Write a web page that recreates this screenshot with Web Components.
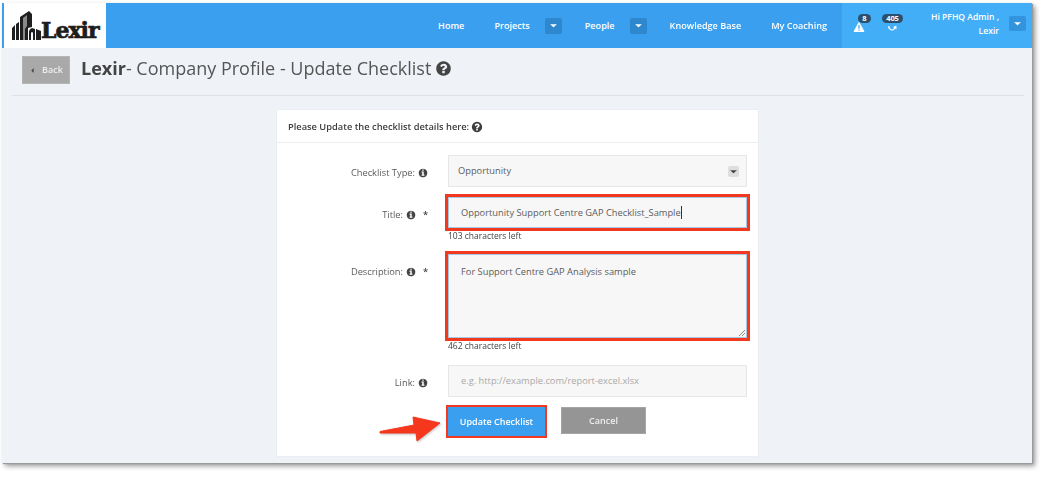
<!DOCTYPE html>
<html lang="en">
<head>
<meta charset="utf-8">
<title>Lexir - Update Checklist</title>
<style>
  html { overflow: hidden; background: #fff; }
  body { margin: 0; padding: 0 0 14px; background: #fff; font-family: "Open Sans", "Liberation Sans", sans-serif; }
</style>
</head>
<body>
<lx-shot>
  <lx-navbar slot="nav">
    <lx-nav-item>Home</lx-nav-item>
    <lx-nav-item dropdown>Projects</lx-nav-item>
    <lx-nav-item dropdown>People</lx-nav-item>
    <lx-nav-item>Knowledge Base</lx-nav-item>
    <lx-nav-item>My Coaching</lx-nav-item>
  </lx-navbar>
  <lx-title-bar slot="title"><b>Lexir</b>- Company Profile - Update Checklist</lx-title-bar>
  <lx-card heading="Please Update the checklist details here:" slot="main">
    <lx-field label="Checklist Type:" kind="select">Opportunity</lx-field>
    <lx-field label="Title:" kind="input" required highlight caret help="103 characters left" gap="12">Opportunity Support Centre GAP Checklist_Sample</lx-field>
    <lx-field label="Description:" kind="textarea" required highlight help="462 characters left" gap="13">For Support Centre GAP Analysis sample</lx-field>
    <lx-field label="Link:" kind="placeholder">e.g. http://example.com/report-excel.xlsx</lx-field>
    <lx-actions></lx-actions>
  </lx-card>
</lx-shot>

<script>
const ICONS = {
  question: '<path d="M1024 1376v-192q0-14-9-23t-23-9h-192q-14 0-23 9t-9 23v192q0 14 9 23t23 9h192q14 0 23-9t9-23zm256-672q0-88-55.500-163t-138.500-116-170-41q-243 0-371 213-15 24 8 42l132 100q7 6 19 6 16 0 25-12 53-68 86-92 34-24 86-24 48 0 85.500 26t37.500 59q0 38-20 61t-68 45q-63 28-115.500 86.500t-52.500 125.500v36q0 14 9 23t23 9h192q14 0 23-9t9-23q0-19 21.500-49.500t54.500-49.500q32-18 49-28.500t46-35 44.500-48 28-60.500 12.500-81zm384 192q0 209-103 385.500t-279.500 279.500-385.500 103-385.500-103-279.500-279.500-103-385.500 103-385.500 279.500-279.500 385.500-103 385.500 103 279.500 279.500 103 385.500z"/>',
  info: '<path d="M1152 1376v-160q0-14-9-23t-23-9h-96v-512q0-14-9-23t-23-9h-320q-14 0-23 9t-9 23v160q0 14 9 23t23 9h96v320h-96q-14 0-23 9t-9 23v160q0 14 9 23t23 9h448q14 0 23-9t9-23zm-128-896v-160q0-14-9-23t-23-9h-192q-14 0-23 9t-9 23v160q0 14 9 23t23 9h192q14 0 23-9t9-23zm640 416q0 209-103 385.500t-279.500 279.500-385.500 103-385.500-103-279.500-279.500-103-385.500 103-385.500 279.500-279.500 385.500-103 385.500 103 279.500 279.500 103 385.500z"/>',
  caret: '<path d="M320 640h1152q40 0 40 30 0 14-11 28l-576 544q-14 12-29 12t-29-12L291 698q-11-14-11-28 0-30 40-30z"/>',
  left: '<path d="M1184 320v1152q0 40-30 40-14 0-28-11L582 925q-12-14-12-29t12-29l544-576q14-11 28-11 30 0 30 40z"/>',
  warning: '<path fill-rule="evenodd" d="M896 160q50 0 80 46l704 1280q28 50 2 96t-82 46H192q-56 0-82-46t2-96L816 206q30-46 80-46zM790 640l26 560h160l26-560zM896 1280a96 96 0 1 0 0 192 96 96 0 0 0 0-192z"/>',
  sync: '<path d="M300 800a600 600 0 0 0 1100 330l180 110-40-560-500 250 170 90a340 340 0 0 1-650-220z"/>'
};

class LxIcon extends HTMLElement {
  connectedCallback() {
    const size = this.getAttribute("size") || "10";
    const name = this.getAttribute("name");
    this.attachShadow({ mode: "open" }).innerHTML = `
      <style>
        :host { display: inline-flex; width: ${size}px; height: ${size}px; flex: none; }
        svg { width: 100%; height: 100%; fill: currentColor; display: block; }
      </style>
      <svg viewBox="0 0 1792 1792">${ICONS[name] || ""}</svg>`;
  }
}

class LxShot extends HTMLElement {
  constructor() {
    super();
    this.attachShadow({ mode: "open" }).innerHTML = `
      <style>
        :host {
          display: flex; flex-direction: column; box-sizing: border-box;
          width: 1030px; height: 460px; margin: 3px 0 0 2px;
          background: #eff3f8; color: #555;
          box-shadow: 1px 1px 1px #9a9a9a, 3px 3px 5px rgba(0,0,0,.42);
          filter: blur(.35px);
        }
        .main { display: flex; justify-content: center; padding-left: 1px; }
      </style>
      <slot name="nav"></slot>
      <slot name="title"></slot>
      <div class="main"><slot name="main"></slot></div>`;
  }
}

class LxNavbar extends HTMLElement {
  constructor() {
    super();
    this.attachShadow({ mode: "open" }).innerHTML = `
      <style>
        :host {
          display: flex; height: 45px; flex: none; background: #3a9fee;
          padding-left: 2px; color: #fff;
        }
        .logo {
          width: 102px; background: #fff; display: flex; align-items: flex-end;
          box-sizing: border-box; padding: 0 0 8px 8px; flex: none;
        }
        .logo svg { width: 29px; height: 29px; display: block; flex: none; }
        .logo span {
          font: 700 22px/20px "DejaVu Serif", serif; color: #1d1d1d;
          letter-spacing: -1px; -webkit-text-stroke: .7px #1d1d1d;
        }
        .links { flex: 1; display: flex; justify-content: flex-end; align-items: stretch; }
        .tools {
          width: 190px; flex: none; box-sizing: border-box; background: #42aef8;
          display: flex; align-items: center; position: relative;
        }
        .alert { position: relative; display: flex; margin-top: 2px; }
        .alert.a { margin-left: 11px; }
        .alert.b { margin-left: 21px; }
        .badge {
          position: absolute; background: #2c4f6b; color: #fff; border-radius: 5px;
          font: 700 7.500px/9px "Open Sans", sans-serif; text-align: center; height: 9px;
        }
        .a .badge { left: 5px; top: -7px; width: 13px; }
        .b .badge { left: -4px; top: -7px; width: 21px; letter-spacing: -.2px; }
        .user {
          margin-left: auto; text-align: right; margin-top: -3px;
          font: 600 8.600px/14px "Open Sans", sans-serif; width: 80px;
        }
        .drop {
          width: 17px; height: 15px; margin: -5px 6px 0 10px; border-radius: 2px;
          background: #3393dc; display: flex; align-items: center; justify-content: center; flex: none;
        }
      </style>
      <div class="logo">
        <svg viewBox="0 0 29 29">
          <path fill="#1f1f1f" d="M0 17l3-3v15H0zM4 13l3-2v18H4zM8 6l9-6 3 3v13l-4 1v12H8zM17 21q0-3 3-4l3 1v11h-2v-7q-1-2-2 0v7h-2zM24 18l5 2v9h-5z"/>
          <path fill="#8a8a8a" d="M11 7l4-3v11l-2 3v11h-2z"/>
        </svg>
        <span>Lexir</span>
      </div>
      <div class="links"><slot></slot></div>
      <div class="tools">
        <div class="alert a"><lx-icon name="warning" size="12"></lx-icon><span class="badge">8</span></div>
        <div class="alert b"><lx-icon name="sync" size="12"></lx-icon><span class="badge">405</span></div>
        <div class="user">Hi PFHQ Admin ,<br>Lexir</div>
        <div class="drop"><lx-icon name="caret" size="9"></lx-icon></div>
      </div>`;
  }
}

class LxNavItem extends HTMLElement {
  connectedCallback() {
    const drop = this.hasAttribute("dropdown");
    this.attachShadow({ mode: "open" }).innerHTML = `
      <style>
        :host {
          display: flex; align-items: center; padding: 0 15px;
          font: 600 9.100px/14px "Open Sans", sans-serif; color: #fff; white-space: nowrap;
          ${drop ? "padding-right: 8px;" : ""}
        }
        .drop {
          width: 17px; height: 16px; margin-left: 15px; border-radius: 2px; background: #2f87cd;
          display: flex; align-items: center; justify-content: center;
        }
      </style>
      <span><slot></slot></span>
      ${drop ? '<span class="drop"><lx-icon name="caret" size="9"></lx-icon></span>' : ""}`;
  }
}

class LxTitleBar extends HTMLElement {
  constructor() {
    super();
    this.attachShadow({ mode: "open" }).innerHTML = `
      <style>
        :host { display: block; flex: none; margin: 0 8px 0 10px; border-bottom: 1px solid #dde2e7; height: 48px; box-sizing: border-box; padding: 8px 0 0 10px; }
        .row { display: flex; align-items: flex-start; }
        .back {
          width: 48px; height: 28px; box-sizing: border-box; background: #a9a9a9; border: 1px solid #b5b5b5;
          color: #eee; display: flex; align-items: center; justify-content: center; gap: 6px;
          font: 600 9px/12px "Open Sans", sans-serif; flex: none;
        }
        h1 {
          margin: 0 0 0 11px; font: 400 18px/24px "Open Sans", sans-serif; color: #555;
          display: flex; align-items: center; gap: 4px; white-space: nowrap;
        }
        ::slotted(b) { font-weight: 700; color: #444; }
        lx-icon { color: #444; }
      </style>
      <div class="row">
        <div class="back"><lx-icon name="left" size="7"></lx-icon>Back</div>
        <h1><span><slot></slot></span><lx-icon name="question" size="17"></lx-icon></h1>
      </div>`;
  }
}

class LxCard extends HTMLElement {
  connectedCallback() {
    this.attachShadow({ mode: "open" }).innerHTML = `
      <style>
        :host {
          display: block; width: 481px; height: 346px; margin-top: 14px; box-sizing: border-box;
          background: #fff; box-shadow: 0 0 1px rgba(0,0,0,.12); position: relative;
        }
        header {
          height: 33px; box-sizing: border-box; border-bottom: 1px solid #eceff2; padding: 1px 11px 0;
          display: flex; align-items: center; gap: 2px;
          font: 600 9.300px/12px "Open Sans", sans-serif; color: #3d3d3d;
        }
        .body { padding: 12px 11px 0; display: flex; flex-direction: column; }
      </style>
      <header>${this.getAttribute("heading")}<lx-icon name="question" size="12"></lx-icon></header>
      <div class="body"><slot></slot></div>`;
  }
}

class LxField extends HTMLElement {
  connectedCallback() {
    const kind = this.getAttribute("kind");
    const help = this.getAttribute("help");
    const req = this.hasAttribute("required");
    const hl = this.hasAttribute("highlight");
    const gap = this.getAttribute("gap") || "10";
    this.attachShadow({ mode: "open" }).innerHTML = `
      <style>
        :host {
          display: grid; grid-template-columns: 139px 299px; column-gap: 21px;
          margin-bottom: ${gap}px; font: 400 9.300px/14px "Open Sans", sans-serif; color: #555;
        }
        .label {
          display: flex; justify-content: flex-end; align-items: center; gap: 3px;
          box-sizing: border-box; height: 31px; padding-top: 4px; margin-right: -1px;
          white-space: nowrap; color: #5a5a5a;
        }
        .label.top { height: 18px; margin-top: 9px; padding-top: 0; }
        .label .star { width: 8px; text-align: right; font-weight: 600; color: #444; margin-left: 1px; }
        lx-icon { color: #444; }
        .ctl {
          box-sizing: border-box; height: 32px; background: #f7f7f7; border: 1px solid #e6e6e6;
          display: flex; align-items: center; padding: 0 7px 0 9px; position: relative; color: #5c5c5c;
        }
        .ctl.input, .ctl.placeholder { padding-left: 12px; }
        .ctl.input { height: 31px; }
        .ctl.hl { outline: 3px solid #f2381f; outline-offset: 0; border-color: #a9c6e3; }
        .ctl.textarea { height: 84px; align-items: flex-start; padding: 10px 12px; }
        .ctl.placeholder { color: #aaa; }
        .car { width: 1px; height: 13px; background: #333; }
        .arrow {
          margin-left: auto; width: 11px; height: 11px; border-radius: 2px; background: #dedede;
          display: flex; align-items: center; justify-content: center; color: #333;
        }
        .grip { position: absolute; right: 1px; bottom: 1px; width: 7px; height: 7px; }
        .help { font-size: 8.500px; line-height: 12px; color: #444; padding-top: 2px; }
      </style>
      <div class="label ${kind === "textarea" ? "top" : ""}">${this.getAttribute("label")}
        <lx-icon name="info" size="10"></lx-icon>${req ? '<span class="star">*</span>' : ""}</div>
      <div>
        <div class="ctl ${kind} ${hl ? "hl" : ""}"><span><slot></slot></span>
          ${this.hasAttribute("caret") ? '<span class="car"></span>' : ""}
          ${kind === "select" ? '<span class="arrow"><lx-icon name="caret" size="9"></lx-icon></span>' : ""}
          ${kind === "textarea" ? '<svg class="grip" viewBox="0 0 7 7"><path d="M1 7l6-6M4 7l3-3" stroke="#888" stroke-width="1"/></svg>' : ""}
        </div>
        ${help ? `<div class="help">${help}</div>` : ""}
      </div>`;
  }
}

class LxActions extends HTMLElement {
  constructor() {
    super();
    this.attachShadow({ mode: "open" }).innerHTML = `
      <style>
        :host {
          display: flex; gap: 16px; margin-left: 160px; align-items: flex-start; position: relative;
          font: 600 9px/12px "Open Sans", sans-serif;
        }
        .btn {
          box-sizing: border-box; height: 28px; display: flex; align-items: center; justify-content: center;
          color: #fff;
        }
        .save { width: 97px; height: 29px; background: #3a9fee; outline: 2px solid #f2381f; }
        .cancel { width: 85px; height: 27px; background: #959595; border: 1px solid #a5a5a5; color: #eee; }
        svg { position: absolute; left: -69px; top: 9px; width: 62px; height: 28px; overflow: visible; filter: drop-shadow(1px 1px 1px rgba(0,0,0,.25)); }
      </style>
      <svg viewBox="0 0 62 28">
        <path fill="#f5371d" stroke="#f5371d" stroke-linejoin="round" d="M1 15.500L35 9 34 1 61 7 38 25 37 17 1 17z"/>
      </svg>
      <div class="btn save">Update Checklist</div>
      <div class="btn cancel">Cancel</div>`;
  }
}

customElements.define("lx-icon", LxIcon);
customElements.define("lx-shot", LxShot);
customElements.define("lx-navbar", LxNavbar);
customElements.define("lx-nav-item", LxNavItem);
customElements.define("lx-title-bar", LxTitleBar);
customElements.define("lx-card", LxCard);
customElements.define("lx-field", LxField);
customElements.define("lx-actions", LxActions);
</script>
</body>
</html>
